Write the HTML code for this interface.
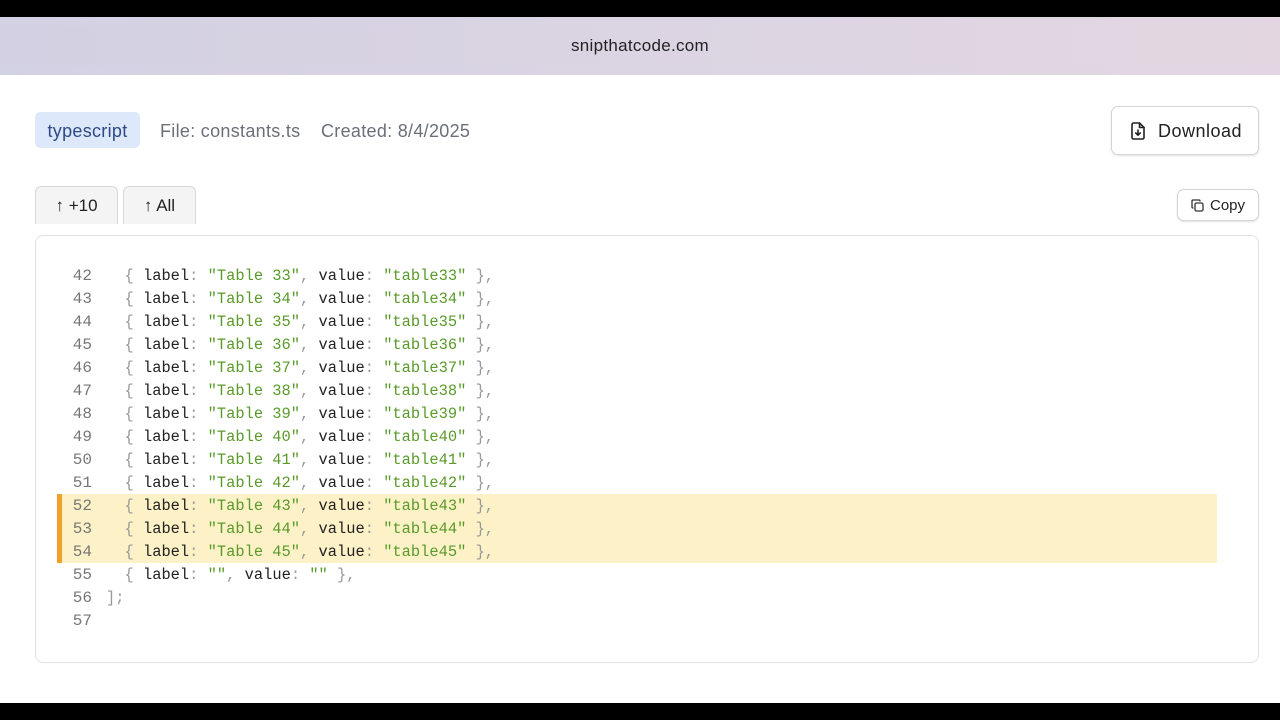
<!DOCTYPE html>
<html><head><meta charset="utf-8"><style>
*{margin:0;padding:0;box-sizing:border-box}
body{width:1280px;height:720px;overflow:hidden;background:#fff;font-family:"Liberation Sans",sans-serif;position:relative}
.top{position:absolute;left:0;top:0;width:1280px;height:17px;background:#000}
.bar{position:absolute;left:0;top:17px;width:1280px;height:58px;background:linear-gradient(90deg,#d3d1e4,#dcd5e3 60%,#e3d6e2)}
.bar .in{position:absolute;top:8px;left:0;right:0;height:40px;background:linear-gradient(90deg,#d2d0e2,#ddd5e2 60%,#e3d6e1)}
.bar span{position:absolute;left:0;right:0;top:19px;text-align:center;font-size:17px;letter-spacing:.3px;color:#222}
.bot{position:absolute;left:0;top:703px;width:1280px;height:17px;background:#000}
.tag{position:absolute;left:35px;top:112px;width:105px;height:36px;background:#dde9fb;border-radius:5px;color:#2d4a85;font-size:18px;letter-spacing:.3px;line-height:38px;text-align:center}
.meta{position:absolute;top:121px;font-size:18px;letter-spacing:.3px;color:#6b6f78}
.btn{position:absolute;background:#fff;border:1px solid #d6d6da;border-radius:7px;box-shadow:0 1px 2px rgba(0,0,0,.12);color:#222}
.tab{position:absolute;top:186px;height:38px;background:#f4f4f5;border:1px solid #d8d8dc;border-bottom:none;border-radius:6px 6px 0 0;font-size:17px;color:#222;text-align:center;line-height:38px}
.box{position:absolute;left:35px;top:235px;width:1224px;height:428px;border:1px solid #e2e2e5;border-radius:8px}
.l{position:absolute;left:0;height:23px;width:1217px;font-family:"Liberation Mono",monospace;font-size:15.4px;line-height:25px;white-space:pre;color:#222}
.n{position:absolute;right:1125px;color:#777;text-align:right;font-size:16px}
.c{position:absolute;left:106px}
.p{color:#999}.s{color:#5a9a2a}
.hl{position:absolute;left:57px;top:494px;width:1160px;height:69px;background:#fcf1c7;border-left:5px solid #f0a12c}
</style></head><body>
<div class="top"></div>
<div class="bar"><div class="in"></div><span>snipthatcode.com</span></div>
<div class="tag">typescript</div>
<div class="meta" style="left:160px">File: constants.ts</div>
<div class="meta" style="left:321px">Created: 8/4/2025</div>
<div class="btn" style="left:1111px;top:106px;width:148px;height:49px">
<svg style="position:absolute;left:18px;top:15px" width="16" height="18" viewBox="0 0 16 18" fill="none" stroke="#222" stroke-width="1.6" stroke-linejoin="round" stroke-linecap="round"><path d="M2 2.5a1.5 1.5 0 0 1 1.5-1.5H9.5L14 5.5V15.5a1.5 1.5 0 0 1-1.5 1.5h-9A1.5 1.5 0 0 1 2 15.5z"/><path d="M9.5 1v4.5H14"/><path d="M8 8v5M5.8 11 8 13.2 10.2 11"/></svg>
<span style="position:absolute;left:46px;top:14px;font-size:18px;letter-spacing:.5px">Download</span></div>
<div class="tab" style="left:35px;width:83px">↑ +10</div>
<div class="tab" style="left:123px;width:73px">↑ All</div>
<div class="btn" style="left:1177px;top:189px;width:82px;height:32px">
<svg style="position:absolute;left:13px;top:9px" width="13" height="13" viewBox="0 0 13 13" fill="none" stroke="#333" stroke-width="1.3"><rect x="4" y="4" width="8" height="8" rx="1.5"/><path d="M2.5 9H2a1 1 0 0 1-1-1V2a1 1 0 0 1 1-1h6a1 1 0 0 1 1 1v.5"/></svg>
<span style="position:absolute;left:32px;top:7px;font-size:15px">Copy</span></div>
<div class="box"></div>
<div class="hl"></div>
<div class="l" style="top:264px"><span class="n">42</span><span class="c">  <span class="p">{</span> label<span class="p">:</span> <span class="s">"Table 33"</span><span class="p">,</span> value<span class="p">:</span> <span class="s">"table33"</span> <span class="p">},</span></span></div>
<div class="l" style="top:287px"><span class="n">43</span><span class="c">  <span class="p">{</span> label<span class="p">:</span> <span class="s">"Table 34"</span><span class="p">,</span> value<span class="p">:</span> <span class="s">"table34"</span> <span class="p">},</span></span></div>
<div class="l" style="top:310px"><span class="n">44</span><span class="c">  <span class="p">{</span> label<span class="p">:</span> <span class="s">"Table 35"</span><span class="p">,</span> value<span class="p">:</span> <span class="s">"table35"</span> <span class="p">},</span></span></div>
<div class="l" style="top:333px"><span class="n">45</span><span class="c">  <span class="p">{</span> label<span class="p">:</span> <span class="s">"Table 36"</span><span class="p">,</span> value<span class="p">:</span> <span class="s">"table36"</span> <span class="p">},</span></span></div>
<div class="l" style="top:356px"><span class="n">46</span><span class="c">  <span class="p">{</span> label<span class="p">:</span> <span class="s">"Table 37"</span><span class="p">,</span> value<span class="p">:</span> <span class="s">"table37"</span> <span class="p">},</span></span></div>
<div class="l" style="top:379px"><span class="n">47</span><span class="c">  <span class="p">{</span> label<span class="p">:</span> <span class="s">"Table 38"</span><span class="p">,</span> value<span class="p">:</span> <span class="s">"table38"</span> <span class="p">},</span></span></div>
<div class="l" style="top:402px"><span class="n">48</span><span class="c">  <span class="p">{</span> label<span class="p">:</span> <span class="s">"Table 39"</span><span class="p">,</span> value<span class="p">:</span> <span class="s">"table39"</span> <span class="p">},</span></span></div>
<div class="l" style="top:425px"><span class="n">49</span><span class="c">  <span class="p">{</span> label<span class="p">:</span> <span class="s">"Table 40"</span><span class="p">,</span> value<span class="p">:</span> <span class="s">"table40"</span> <span class="p">},</span></span></div>
<div class="l" style="top:448px"><span class="n">50</span><span class="c">  <span class="p">{</span> label<span class="p">:</span> <span class="s">"Table 41"</span><span class="p">,</span> value<span class="p">:</span> <span class="s">"table41"</span> <span class="p">},</span></span></div>
<div class="l" style="top:471px"><span class="n">51</span><span class="c">  <span class="p">{</span> label<span class="p">:</span> <span class="s">"Table 42"</span><span class="p">,</span> value<span class="p">:</span> <span class="s">"table42"</span> <span class="p">},</span></span></div>
<div class="l" style="top:494px"><span class="n">52</span><span class="c">  <span class="p">{</span> label<span class="p">:</span> <span class="s">"Table 43"</span><span class="p">,</span> value<span class="p">:</span> <span class="s">"table43"</span> <span class="p">},</span></span></div>
<div class="l" style="top:517px"><span class="n">53</span><span class="c">  <span class="p">{</span> label<span class="p">:</span> <span class="s">"Table 44"</span><span class="p">,</span> value<span class="p">:</span> <span class="s">"table44"</span> <span class="p">},</span></span></div>
<div class="l" style="top:540px"><span class="n">54</span><span class="c">  <span class="p">{</span> label<span class="p">:</span> <span class="s">"Table 45"</span><span class="p">,</span> value<span class="p">:</span> <span class="s">"table45"</span> <span class="p">},</span></span></div>
<div class="l" style="top:563px"><span class="n">55</span><span class="c">  <span class="p">{</span> label<span class="p">:</span> <span class="s">""</span><span class="p">,</span> value<span class="p">:</span> <span class="s">""</span> <span class="p">},</span></span></div>
<div class="l" style="top:586px"><span class="n">56</span><span class="c"><span class="p">];</span></span></div>
<div class="l" style="top:609px"><span class="n">57</span><span class="c"></span></div>
<div class="bot"></div>
</body></html>
